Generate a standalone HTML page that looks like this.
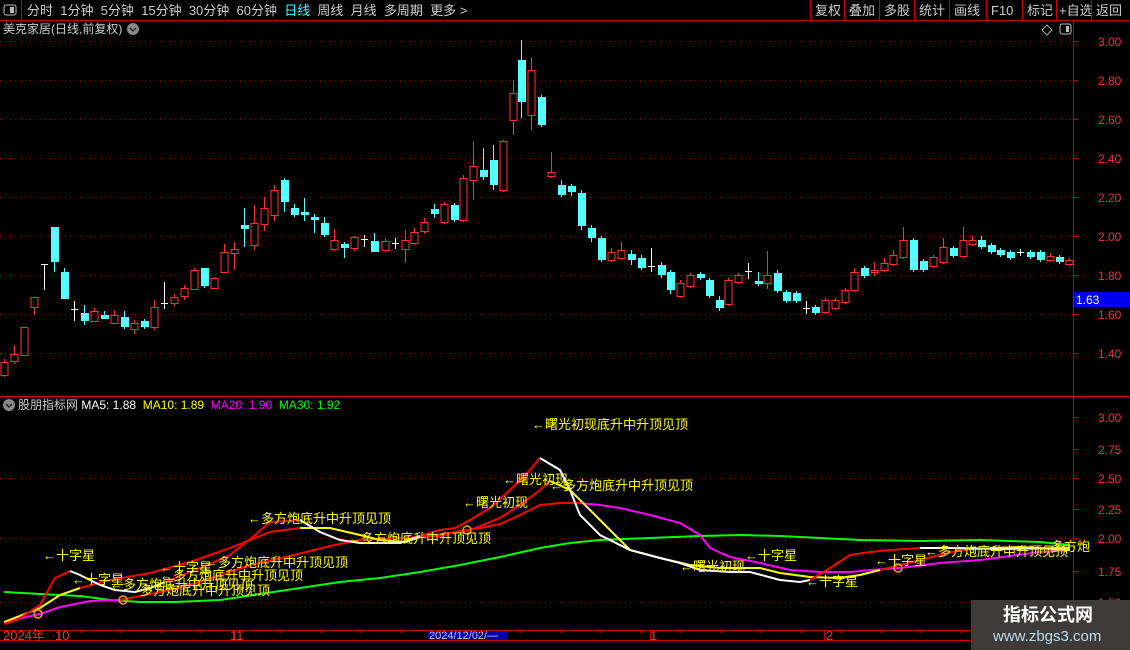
<!DOCTYPE html>
<html><head><meta charset="utf-8"><style>
*{margin:0;padding:0;box-sizing:border-box}
body{width:1130px;height:650px;background:#000;overflow:hidden;font-family:"Liberation Sans","Noto Sans CJK SC",sans-serif;position:relative;color:#ccc}
.t{position:absolute;font-size:12px;white-space:nowrap;line-height:14px}
</style></head><body>
<svg id="s" width="1130" height="650" style="position:absolute;left:0;top:0" font-family="Liberation Sans, Noto Sans CJK SC, sans-serif"></svg>
<div class="t" style="left:27px;top:3px;color:#ccc;font-size:13px;line-height:15px">分时&nbsp;&nbsp;1分钟&nbsp;&nbsp;5分钟&nbsp;&nbsp;15分钟&nbsp;&nbsp;30分钟&nbsp;&nbsp;60分钟&nbsp;&nbsp;<span style="color:#3ff">日线</span>&nbsp;&nbsp;周线&nbsp;&nbsp;月线&nbsp;&nbsp;多周期&nbsp;&nbsp;更多 &gt;</div>
<div class="t" style="left:3px;top:22px;color:#ccc">美克家居(日线,前复权)</div>
<div class="t" style="left:18px;top:398px;color:#ccc">股朋指标网 <span style="color:#fff">MA5: 1.88</span>&nbsp;&nbsp;<span style="color:#ff0">MA10: 1.89</span>&nbsp;&nbsp;<span style="color:#f0f">MA20: 1.90</span>&nbsp;&nbsp;<span style="color:#0f0">MA30: 1.92</span></div>
<div style="position:absolute;left:971px;top:600px;width:159px;height:50px;background:#3e3a39"></div>
<div class="t" style="left:1003px;top:605px;font-size:18px;line-height:20px;color:#fff;font-weight:bold">指标公式网</div>
<div class="t" style="left:993px;top:628px;font-size:15px;line-height:17px;color:#bde">www.zbgs3.com</div>
<script>
var s=document.getElementById('s'),h='';
function L(x1,y1,x2,y2,c,w,d){h+='<line x1="'+x1+'" y1="'+y1+'" x2="'+x2+'" y2="'+y2+'" stroke="'+c+'" stroke-width="'+(w||1)+'"'+(d?' stroke-dasharray="'+d+'"':'')+'/>';}
function T(x,y,t,c,fs,a){h+='<text x="'+x+'" y="'+y+'" fill="'+c+'" font-size="'+(fs||12)+'"'+(a?' text-anchor="'+a+'"':'')+'>'+t+'</text>';}
L(0,20.5,1130,20.5,'#c00');L(21.5,0,21.5,20,'#c00');
h+='<rect x="4" y="5" width="12" height="10" rx="2" fill="none" stroke="#bbb"/><rect x="10" y="7" width="4" height="6" fill="#bbb"/>';
var bx=[810,844,879,914,949,986,1022,1056,1091],bt=['复权','叠加','多股','统计','画线','F10','标记','+自选','返回'];
for(var i=0;i<bx.length;i++){L(bx[i]+.5,0,bx[i]+.5,20,'#c00');T(bx[i]+(i==7?3:5),15,bt[i],'#ccc',13);}
h+='<circle cx="133" cy="29" r="6" fill="#888"/><path d="M130 28 l3 3 l3 -3" stroke="#000" fill="none"/>';
h+='<path d="M1047 25 l5 5 l-5 5 l-5 -5z" stroke="#aaa" fill="none"/><rect x="1060" y="24" width="11" height="10" rx="2" fill="none" stroke="#bbb"/><rect x="1066" y="26" width="3" height="6" fill="#bbb"/>';
L(1073.5,21,1073.5,640,'#c00');L(0,396.5,1130,396.5,'#c00',1.5);L(0,630.5,1130,630.5,'#c00');L(0,640.5,1130,640.5,'#c00');
var pl=[[3.00,41],[2.80,80],[2.60,119],[2.40,158],[2.20,197],[2.00,236],[1.80,275],[1.60,314],[1.40,353]];
pl.forEach(function(p){L(0,p[1]+.5,1073,p[1]+.5,'#a00',1,'1 4');L(1073,p[1]+.5,1078,p[1]+.5,'#c00');T(1098,p[1]+5,p[0].toFixed(2),'#e33',12);});
var ql=[[3.00,417],[2.75,449],[2.50,478],[2.25,509],[2.00,538],[1.75,571],[1.50,602]];
ql.forEach(function(p){if(p[0]==2.5||p[0]==2||p[0]==1.5)L(0,p[1]+.5,1073,p[1]+.5,'#a00',1,'1 4');L(1073,p[1]+.5,1078,p[1]+.5,'#c00');T(1098,p[1]+5,p[0].toFixed(2),'#e33',12);});
h+='<rect x="1074" y="292" width="56" height="15" fill="#00e"/>';T(1076,304,'1.63','#fff',12);
[59,234,650,824].forEach(function(x){L(x+.5,631,x+.5,640,'#c00');});
T(3,640,'2024年','#e33',13);T(55,640,'10','#e33',13);T(230,640,'11','#e33',13);T(650,640,'1','#e33',13);T(826,640,'2','#e33',13);
h+='<rect x="428" y="631" width="80" height="9" fill="#00a"/>';T(429,639,'2024/12/02/—','#ccc',11);
for(var x=40;x<1073;x+=40)L(x+.5,630,x+.5,633,'#c00');
var C=[[4,362,375,359,377,'r'],[14,354,361,345,364,'r'],[24,327,355,327,356,'r'],[34,297,307,297,315,'r'],[44,264,265,264,290,'w'],[54,227,262,227,272,'c'],[64,272,299,268,299,'c'],[74,309,310,301,321,'w'],[84,313,321,305,325,'c'],[94,311,321,308,321,'r'],[104,315,319,311,319,'c'],[114,315,323,310,323,'r'],[124,317,327,311,329,'c'],[134,323,329,320,334,'r'],[144,321,327,319,329,'c'],[154,307,327,300,330,'r'],[164,303,304,282,309,'w'],[174,297,303,294,306,'r'],[184,288,296,285,300,'r'],[194,270,289,268,289,'r'],[204,268,286,268,288,'c'],[214,278,288,277,289,'r'],[224,252,272,244,272,'r'],[234,249,253,242,270,'r'],[244,225,229,208,247,'c'],[254,223,245,205,250,'r'],[264,208,224,197,231,'r'],[274,190,215,185,221,'r'],[284,180,202,178,212,'c'],[294,208,215,204,217,'c'],[304,212,215,198,221,'c'],[314,217,220,214,233,'c'],[324,223,235,217,237,'c'],[334,240,249,229,251,'r'],[344,244,248,242,258,'c'],[354,237,248,236,251,'r'],[364,239,240,235,247,'w'],[374,241,252,233,252,'c'],[385,241,250,238,252,'r'],[395,243,244,238,249,'w'],[405,240,249,230,263,'r'],[414,232,243,228,245,'r'],[424,222,231,218,234,'r'],[434,209,214,204,218,'c'],[444,204,222,202,224,'r'],[454,205,220,203,222,'c'],[463,178,220,175,222,'r'],[473,166,180,141,200,'r'],[483,170,177,148,180,'c'],[493,160,185,145,190,'c'],[503,141,190,140,192,'r'],[513,93,120,80,135,'r'],[521,60,102,40,118,'c'],[531,70,115,57,130,'r'],[541,97,125,95,127,'c'],[551,172,176,152,178,'r'],[561,185,195,180,197,'c'],[571,186,192,184,196,'c'],[581,193,226,190,230,'c'],[591,228,238,225,242,'c'],[601,238,260,236,262,'c'],[611,252,260,248,262,'r'],[621,250,258,242,260,'r'],[631,254,260,250,265,'c'],[641,258,268,255,270,'c'],[651,266,267,248,272,'w'],[661,265,275,262,278,'c'],[670,272,290,270,294,'c'],[680,283,296,280,298,'r'],[690,275,286,273,288,'r'],[700,274,278,272,280,'c'],[709,280,296,278,298,'c'],[719,300,308,296,311,'c'],[728,280,304,278,306,'r'],[738,275,282,273,284,'r'],[748,271,272,263,279,'w'],[758,281,284,272,286,'c'],[767,275,283,251,289,'r'],[777,273,291,270,293,'c'],[786,292,301,290,303,'c'],[796,293,301,291,303,'c'],[806,308,309,301,314,'w'],[815,307,313,305,315,'c'],[825,300,312,298,314,'r'],[835,300,308,298,310,'r'],[845,290,302,288,304,'r'],[854,272,290,268,292,'r'],[864,268,276,266,278,'c'],[874,270,272,262,276,'r'],[884,263,270,258,272,'r'],[893,255,264,250,266,'r'],[903,240,257,227,259,'r'],[913,240,270,238,272,'c'],[923,261,270,259,272,'c'],[933,257,266,255,268,'r'],[943,247,262,238,264,'r'],[953,248,256,246,258,'c'],[963,240,256,227,258,'r'],[972,240,244,236,246,'r'],[981,240,247,236,249,'c'],[991,245,252,243,254,'c'],[1000,250,255,248,257,'c'],[1010,252,258,250,260,'c'],[1020,252,253,249,256,'w'],[1030,252,257,250,259,'c'],[1040,252,260,250,262,'c'],[1050,256,260,253,262,'r'],[1059,257,262,255,264,'c'],[1069,260,264,258,266,'r']];
C.forEach(function(c){var col=c[5]=='r'?'#ff3232':c[5]=='c'?'#54ffff':'#fff';var x=c[0];
L(x+.5,c[3],x+.5,c[4],col);
if(c[5]=='w'){L(x-3,c[1]+.5,x+4,c[1]+.5,col);}
else if(c[5]=='r'){h+='<rect x="'+(x-3)+'" y="'+(c[1]+.5)+'" width="7" height="'+(c[2]-c[1])+'" fill="#000" stroke="'+col+'"/>';}
else{h+='<rect x="'+(x-3)+'" y="'+c[1]+'" width="8" height="'+Math.max(3,c[2]-c[1])+'" fill="'+col+'"/>';}});
function P(pts,col,w){h+='<polyline points="'+pts+'" fill="none" stroke="'+col+'" stroke-width="'+(w||2)+'"/>';}
P('4,592 40,594 80,596 110,600 140,602 175,602 220,600 260,594 300,588 340,582 380,578 420,572 460,565 500,557 540,548 570,543 600,540 650,538 700,536 740,535 780,536 820,538 860,540 920,541 980,540 1040,542 1070,545','#0f0');
P('4,622 40,614 60,607 90,601 120,600','#f0f');
P('120,600 170,590 200,582 250,565 290,556 330,546 360,540 400,538 440,536 460,531 480,528 500,524 520,515 540,505 560,503 580,503','#f00');
P('580,503 600,505 620,508 650,515 680,523 700,535 710,548 730,557 760,563 790,570 820,572 850,572 870,570 900,568 940,563 980,560 1010,556 1040,552 1070,550','#f0f');
P('4,622 40,608 60,595 80,588','#ff0');
P('80,588 110,580 150,573 190,562 230,548 270,532 300,528','#f00');
P('300,528 330,528 360,535 380,540 405,542 420,537','#ff0');
P('420,537 470,530 500,518 520,505 540,490 550,481','#f00');
P('550,481 570,490 590,510 610,530 630,550 660,558 690,565 720,568 760,568 780,573 810,577 840,578 860,575 880,570','#ff0');
P('880,570 900,565 920,560 940,555 960,550 990,548','#f00');P('990,548 1020,547 1070,550','#ff0');
P('4,624 17,620 40,605 55,578 70,571','#f00');
P('70,571 80,575 100,585 115,590 135,592 150,588 165,582','#fff');
P('165,582 200,568 230,555 255,535 270,522 290,521 300,520','#f00');
P('300,520 320,532 340,540 360,543 400,543 420,536','#fff');
P('420,536 440,530 455,528 470,520 490,508 510,490 530,470 540,458','#f00');
P('540,458 560,470 570,490 580,515 600,535 630,550 660,558 680,563 700,570 730,572 750,572 780,580 800,582 810,580','#fff');
P('810,580 830,568 850,555 870,552 890,550 920,548','#f00');P('920,548 950,548 1000,549 1070,548','#fff');
[[38,614],[123,600],[467,530],[898,568]].forEach(function(p){h+='<circle cx="'+p[0]+'" cy="'+p[1]+'" r="4" fill="none" stroke="#f90" stroke-width="1.5"/>';});
var Y='#ff0',F=13;
T(43,560,'←十字星',Y,F);T(72,584,'←十字星',Y,F);T(110,589,'←多方炮底升中升顶见顶',Y,F);T(140,595,'多方炮底升中升顶见顶',Y,F);
T(160,572,'←十字星',Y,F);T(205,567,'←多方炮底升中升顶见顶',Y,F);T(160,580,'←多方炮底升中升顶见顶',Y,F);
T(248,523,'←多方炮底升中升顶见顶',Y,F);T(348,543,'←多方炮底升中升顶见顶',Y,F);T(463,507,'←曙光初现',Y,F);T(503,484,'←曙光初现',Y,F);
T(532,429,'←曙光初现底升中升顶见顶',Y,F);T(550,490,'←多方炮底升中升顶见顶',Y,F);T(680,571,'←曙光初现',Y,F);T(745,560,'←十字星',Y,F);T(806,586,'←十字星',Y,F);
T(875,565,'←十字星',Y,F);T(925,556,'←多方炮底升中升顶见顶',Y,F);T(1038,551,'←多方炮',Y,F);
h+='<circle cx="9" cy="405" r="6" fill="#888"/><path d="M6 404 l3 3 l3 -3" stroke="#000" fill="none"/>';
s.innerHTML=h;
</script>
</body></html>
